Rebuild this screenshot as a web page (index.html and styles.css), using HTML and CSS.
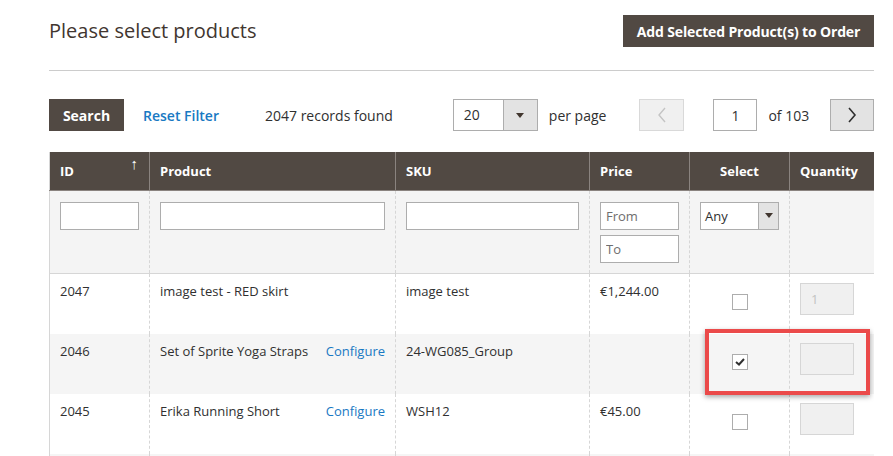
FILE: index.html
```html
<!DOCTYPE html>
<html lang="en">
<head>
  <meta charset="UTF-8">
  <title>Please select products</title>
  <link rel="stylesheet" href="styles.css">
</head>
<body>
  <div class="page">
    <div class="page-head">
      <h2 class="page-title">Please select products</h2>
      <button class="btn-dark btn-add">Add Selected Product(s) to Order</button>
    </div>

    <div class="toolbar">
      <button class="btn-dark btn-search">Search</button>
      <a class="link reset" href="#">Reset Filter</a>
      <span class="records">2047 records found</span>

      <div class="limiter">
        <span class="limiter-value">20</span>
        <span class="limiter-arrow"><span class="tri"></span></span>
      </div>
      <span class="per-page">per page</span>

      <button class="pager-btn pager-prev">
        <svg width="10" height="16" viewBox="0 0 10 16"><path d="M8 1 L2 8 L8 15" fill="none" stroke="#c4c4c4" stroke-width="1.4"/></svg>
      </button>
      <input class="page-input" type="text" value="1">
      <span class="of-pages">of 103</span>
      <button class="pager-btn pager-next">
        <svg width="10" height="16" viewBox="0 0 10 16"><path d="M2 1 L8 8 L2 15" fill="none" stroke="#303030" stroke-width="1.6"/></svg>
      </button>
    </div>

    <div class="grid-wrap">
      <table class="grid">
        <colgroup>
          <col style="width:100px">
          <col style="width:246px">
          <col style="width:194px">
          <col style="width:100px">
          <col style="width:100px">
          <col style="width:85px">
        </colgroup>
        <thead>
          <tr>
            <th>ID <span class="sort">&#8593;</span></th>
            <th>Product</th>
            <th>SKU</th>
            <th>Price</th>
            <th class="center">Select</th>
            <th>Quantity</th>
          </tr>
          <tr class="filters">
            <td><input class="txt w-id" type="text"></td>
            <td><input class="txt w-product" type="text"></td>
            <td><input class="txt w-sku" type="text"></td>
            <td>
              <input class="txt w-price" type="text" placeholder="From">
              <input class="txt w-price to" type="text" placeholder="To">
            </td>
            <td>
              <div class="any-select">
                <span class="any-value">Any</span>
                <span class="any-arrow"><span class="tri"></span></span>
              </div>
            </td>
            <td></td>
          </tr>
        </thead>
        <tbody>
          <tr>
            <td>2047</td>
            <td>image test - RED skirt</td>
            <td>image test</td>
            <td>€1,244.00</td>
            <td class="center"><span class="check"></span></td>
            <td><input class="qty" type="text" value="1" disabled></td>
          </tr>
          <tr class="even">
            <td>2046</td>
            <td><div class="prod">Set of Sprite Yoga Straps <a class="link" href="#">Configure</a></div></td>
            <td>24-WG085_Group</td>
            <td></td>
            <td class="center"><span class="check checked"><svg width="10" height="8" viewBox="0 0 10 8"><path d="M1 4 L4 6.5 L9 1" fill="none" stroke="#303030" stroke-width="2"/></svg></span></td>
            <td><input class="qty" type="text" disabled></td>
          </tr>
          <tr>
            <td>2045</td>
            <td><div class="prod">Erika Running Short <a class="link" href="#">Configure</a></div></td>
            <td>WSH12</td>
            <td>€45.00</td>
            <td class="center"><span class="check"></span></td>
            <td><input class="qty" type="text" disabled></td>
          </tr>
          <tr class="even">
            <td></td>
            <td></td>
            <td></td>
            <td></td>
            <td></td>
            <td></td>
          </tr>
        </tbody>
      </table>
      <div class="highlight"></div>
    </div>
  </div>
</body>
</html>
```

FILE: styles.css
```css
body {
  margin: 0;
  font-family: "Open Sans", "Liberation Sans", sans-serif;
  font-size: 13px;
  color: #303030;
  background: #fff;
}

.page {
  width: 825px;
  margin-left: 49px;
  overflow: hidden;
  height: 456px;
}

/* head */
.page-head {
  display: flex;
  justify-content: space-between;
  align-items: center;
  padding-top: 15px;
  padding-bottom: 23px;
  border-bottom: 1px solid #cccccc;
}

.page-title {
  margin: 0;
  font-weight: 400;
  font-size: 20px;
  color: #41362f;
  position: relative;
  top: -1px;
}

.btn-dark {
  background: #514943;
  color: #fff;
  border: none;
  font-family: inherit;
  font-weight: 700;
  font-size: 14px;
  height: 32px;
  padding: 0;
  white-space: nowrap;
  flex-shrink: 0;
}

.btn-add {
  width: 251px;
  letter-spacing: -0.15px;
}

/* toolbar */
.toolbar {
  display: flex;
  align-items: center;
  margin-top: 28px;
  height: 32px;
  font-size: 14px;
  white-space: nowrap;
}

.toolbar > * {
  flex-shrink: 0;
}

.btn-search {
  width: 75px;
}

.link {
  color: #1979c3;
  text-decoration: none;
}

.reset {
  margin-left: 19px;
  font-weight: 600;
}

.records {
  margin-left: 46px;
}

.limiter {
  margin-left: 60px;
  width: 85px;
  height: 32px;
  box-sizing: border-box;
  border: 1px solid #adadad;
  display: flex;
}

.limiter-value {
  flex: 1;
  padding-left: 10px;
  line-height: 30px;
}

.limiter-arrow,
.any-arrow {
  background: #e3e3e3;
  border-left: 1px solid #adadad;
  display: flex;
  align-items: center;
  justify-content: center;
}

.limiter-arrow {
  width: 33px;
}

.tri {
  width: 0;
  height: 0;
  border-left: 4px solid transparent;
  border-right: 4px solid transparent;
  border-top: 5px solid #41362f;
}

.per-page {
  margin-left: 11px;
}

.pager-btn {
  width: 45px;
  height: 32px;
  box-sizing: border-box;
  display: flex;
  align-items: center;
  justify-content: center;
  padding: 0;
}

.pager-prev {
  margin-left: 33px;
  background: #f0f0f0;
  border: 1px solid #d9d9d9;
}

.pager-next {
  margin-left: 21px;
  background: #e3e3e3;
  border: 1px solid #adadad;
  width: 44px;
}

.page-input {
  margin-left: 29px;
  width: 44px;
  height: 32px;
  box-sizing: border-box;
  border: 1px solid #adadad;
  text-align: center;
  font-family: inherit;
  font-size: 14px;
  color: #303030;
  padding: 0;
}

.of-pages {
  margin-left: 11px;
}

/* grid */
.grid-wrap {
  position: relative;
  margin-top: 21px;
}

.grid {
  width: 825px;
  border-collapse: collapse;
  table-layout: fixed;
  border-left: 1px solid #d6d6d6;
  border-right: 1px solid #d6d6d6;
}

.grid th {
  background: #514943;
  color: #fff;
  font-weight: 700;
  text-align: left;
  height: 38px;
  padding: 0 10px;
  border-left: 1px solid #8a837f;
  box-sizing: border-box;
  border-bottom: 1px solid #8a837f;
}

.grid th:first-child {
  border-left: none;
}

.grid .center {
  text-align: center;
}

.sort {
  float: right;
  font-weight: 400;
  font-size: 15px;
  margin-top: -9px;
  margin-right: 1px;
}

.grid td {
  padding: 11px 10px 0 10px;
  vertical-align: top;
  border-left: 1px dashed #d6d6d6;
  height: 49px;
}

.grid td:first-child {
  border-left: none;
}

.filters td {
  background: #f4f4f4;
  height: 71px;
  border-bottom: 1px solid #d6d6d6;
}

.txt {
  display: block;
  height: 28px;
  box-sizing: border-box;
  border: 1px solid #adadad;
  background: #fff;
  font-family: inherit;
  font-size: 13px;
  padding: 0 8px;
  color: #303030;
}

.txt::placeholder {
  color: #6e6e6e;
}

.w-id { width: 79px; }
.w-product { width: 225px; }
.w-sku { width: 173px; }
.w-price { width: 79px; padding: 0 5px; }
.to { margin-top: 5px; }

.any-select {
  width: 79px;
  height: 28px;
  box-sizing: border-box;
  border: 1px solid #adadad;
  background: #fff;
  display: flex;
  text-align: left;
}

.any-value {
  flex: 1;
  padding-left: 4px;
  line-height: 26px;
}

.any-arrow {
  width: 19px;
}

tbody td {
  line-height: 18px;
}

.grid tbody td {
  padding-top: 8px;
  height: 52px;
}

tbody tr.even td {
  background: #f5f5f5;
}

.prod {
  display: flex;
  justify-content: space-between;
}

.check {
  display: inline-flex;
  align-items: center;
  justify-content: center;
  width: 16px;
  height: 16px;
  box-sizing: border-box;
  border: 1px solid #adadad;
  background: #fff;
  margin-top: 12px;
}

.qty {
  display: block;
  width: 54px;
  height: 32px;
  box-sizing: border-box;
  border: 1px solid #d6d6d6;
  background: #f0f0f0;
  margin-top: 1px;
  font-family: inherit;
  font-size: 13px;
  color: #c2c2c2;
  -webkit-text-fill-color: #c2c2c2;
  opacity: 1;
  padding: 0 10px;
}

/* annotation over the selected row */
.highlight {
  position: absolute;
  left: 656px;
  top: 177px;
  width: 165px;
  height: 66px;
  box-sizing: border-box;
  border: 4px solid #eb4a4a;
  box-shadow: 0 2px 5px rgba(0, 0, 0, 0.35);
}
```
